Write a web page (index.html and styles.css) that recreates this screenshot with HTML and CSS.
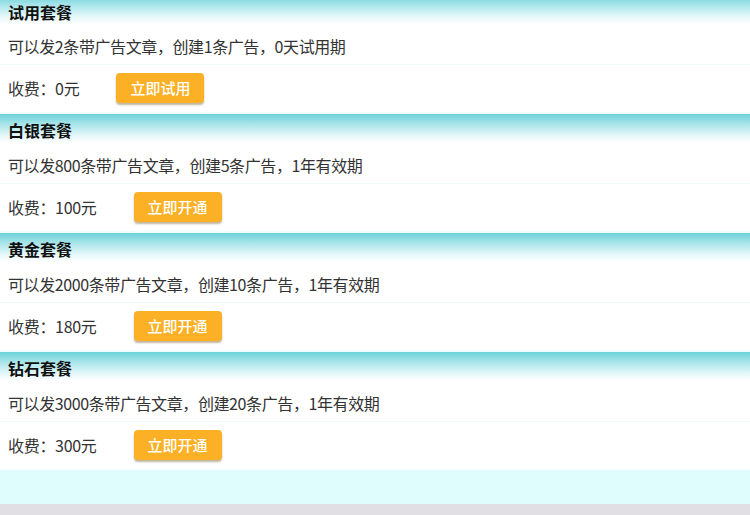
FILE: index.html
```html
<!DOCTYPE html>
<html lang="zh">
<head>
<meta charset="utf-8">
<link rel="stylesheet" href="styles.css">
</head>
<body>
<div class="plans">
  <section class="plan">
    <h2 class="plan-title">试用套餐</h2>
    <div class="plan-desc">可以发2条带广告文章，创建1条广告，0天试用期</div>
    <div class="plan-fee"><span class="fee">收费：0元</span><button class="btn">立即试用</button></div>
  </section>
  <section class="plan">
    <h2 class="plan-title">白银套餐</h2>
    <div class="plan-desc">可以发800条带广告文章，创建5条广告，1年有效期</div>
    <div class="plan-fee"><span class="fee">收费：100元</span><button class="btn">立即开通</button></div>
  </section>
  <section class="plan">
    <h2 class="plan-title">黄金套餐</h2>
    <div class="plan-desc">可以发2000条带广告文章，创建10条广告，1年有效期</div>
    <div class="plan-fee"><span class="fee">收费：180元</span><button class="btn">立即开通</button></div>
  </section>
  <section class="plan">
    <h2 class="plan-title">钻石套餐</h2>
    <div class="plan-desc">可以发3000条带广告文章，创建20条广告，1年有效期</div>
    <div class="plan-fee"><span class="fee">收费：300元</span><button class="btn">立即开通</button></div>
  </section>
  <div class="tail"></div>
</div>
<div class="footer"></div>
</body>
</html>
```
FILE: styles.css
```css
html, body {
  margin: 0;
  padding: 0;
  height: 100%;
  overflow: hidden;
  background: #e2dfe4;
  font-family: "Noto Sans CJK SC", "Liberation Sans", sans-serif;
}
.plans {
  background: #fff;
}
.plan {
  display: flex;
  flex-direction: column;
}
.plan-title {
  margin: 0;
  height: 29px;
  box-sizing: border-box;
  padding: 4px 0 0 8px;
  line-height: 24px;
  font-size: 16px;
  font-weight: bold;
  color: #111;
  background: linear-gradient(to bottom, #6cd2d9 0%, #a9e5ea 35%, #e6f8f9 75%, #ffffff 100%) left bottom / 100% 29px no-repeat;
}
.plan:first-child .plan-title {
  height: 24px;
  padding-top: 0;
}
.plan-desc {
  height: 41px;
  box-sizing: border-box;
  padding: 4px 0 0 8px;
  line-height: 36px;
  font-size: 16px;
  letter-spacing: -0.4px;
  color: #333;
  border-bottom: 1px solid #effafa;
}
.plan-fee {
  height: 49px;
  box-sizing: border-box;
  display: flex;
  align-items: center;
  padding: 0 0 4px 8px;
  font-size: 16px;
  letter-spacing: -0.3px;
  color: #333;
  background: linear-gradient(to bottom, #fff 0%, #fff 94%, #e8fbfb 100%);
}
.fee {
  margin-right: 37px;
}
.btn {
  width: 88px;
  height: 30px;
  border: none;
  border-radius: 4px;
  background: #fbb025;
  color: #fff;
  font-family: "Noto Sans CJK SC", "Liberation Sans", sans-serif;
  font-size: 15px;
  font-weight: 500;
  padding: 0;
  box-shadow: 0 2px 2px rgba(120, 90, 40, 0.45);
  cursor: pointer;
}
.tail {
  height: 33px;
  background: #e0fdfd;
}
.footer {
  height: 11px;
  background: #e2dfe4;
}
```
